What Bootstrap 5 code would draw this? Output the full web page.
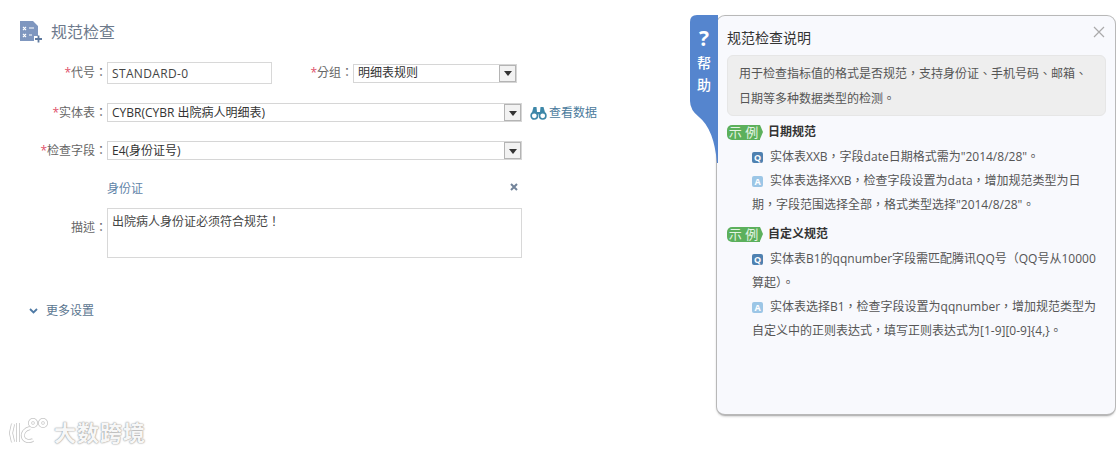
<!DOCTYPE html>
<html lang="zh-TW">
<head>
<meta charset="utf-8">
<title>规范检查</title>
<link href="https://cdn.jsdelivr.net/npm/bootstrap@5.3.0/dist/css/bootstrap.min.css" rel="stylesheet">
<style>
html,body{height:453px;overflow:hidden;background:#fff}
body{font-family:"Open Sans","Noto Sans CJK TC",sans-serif;font-size:12px;color:#444;position:relative}
.page-wrap{height:453px}
.left-side{width:716px;flex:none;padding:20px 0 0 20px}
.page-title{font-size:16px;line-height:24px;color:#6d7a8c;font-weight:400}
.title-row{height:24px;margin-bottom:18px;gap:8px}
.lbl{width:87px;text-align:right;color:#666;flex:none}
.req{color:#e0506a}
.frow-a{height:22px;margin-bottom:19px}
.frow-b{height:19px;margin-bottom:19px}
.tbox{width:165px;height:22px;border:1px solid #d8d8d8;padding:0 4px;line-height:21px;letter-spacing:.35px;color:#444}
.cbox{height:19px;border:1px solid #d6d6d6;padding-left:4px;color:#333;white-space:nowrap}
.cbox-wide{width:415px}
.cbox-mid{width:164px}
.cbox-btn{width:17px;height:17px;border:1px solid #b4b4b4;background:#f2f2f2;flex:none}
.cbox-btn::after{content:"";border-left:4px solid transparent;border-right:4px solid transparent;border-top:5px solid #333;margin-top:1px}
.lbl-two{width:78px;margin-left:3px}
.look-link{color:#4a7a9c;margin-left:8px;gap:2px}
.tag-row{width:415px;margin-left:87px;height:20px;margin-bottom:9px;color:#5f84a8}
.desc-box{width:415px;height:50px;border:1px solid #d8d8d8;padding:4px;color:#444;line-height:17px}
.desc-lbl{margin-bottom:10px}
.desc-row{margin-bottom:44px}
.more-row{color:#5b7690;padding-left:9px;gap:8px;height:18px}
.help-panel{position:relative;width:400px;height:401px;margin-top:15px;border:1px solid #b8b8b8;border-bottom-width:2px;border-radius:9px;background:#f8f9fd;padding:12px 10px 0;box-shadow:0 1px 2px rgba(0,0,0,.15)}
.help-tab{position:absolute;left:-27px;top:-1px;width:28px;height:148px;color:#fff;text-align:center;z-index:2}
.help-tab svg{position:absolute;left:0;top:0}
.help-tab span{position:relative;display:block}
.tab-q{font-size:21px;line-height:24px;margin-top:11px;font-weight:700}
.tab-t{font-size:14px;line-height:22px;font-weight:500}
.tab-first{margin-top:2px}
.close-x{position:absolute;right:10px;top:10px;width:12px;height:12px}
.help-head{font-size:14px;line-height:20px;color:#333;margin:0 0 7px;font-weight:400}
.intro-box{background:#eee;border:1px solid #e6e6e6;border-radius:6px;width:379px;height:61px;padding:5px 11px 0;line-height:25px;color:#555;margin-bottom:5px}
.eg-head{height:22px;font-weight:700;color:#333;line-height:22px;margin-bottom:2px}
.eg-tag{position:relative;display:block;width:33px;height:15px;background:#5cb05c;color:#e4f4e4;border-radius:5px 0 0 5px;font-size:13px;line-height:15px;font-weight:400;text-align:center;margin-right:8px;white-space:nowrap}
.eg-tag::after{content:"";position:absolute;left:33px;top:0;border-left:3px solid #5cb05c;border-top:7.5px solid transparent;border-bottom:7.5px solid transparent}
.qa{margin:0 0 0 25px;width:350px;line-height:24px;color:#555}
.qa-q,.qa-a{display:inline-block;width:11px;height:11px;border-radius:2px;color:#fff;font-size:9px;line-height:11px;text-align:center;margin-right:7px;font-weight:700}
.qa-q{background:#4f81b0}
.qa-a{background:#9cc6e6}
.eg-block{margin-bottom:6px}
.wm{position:absolute;left:9px;top:418px;gap:3px;color:#f7f7f7;font-size:22px;line-height:28px;font-weight:700;letter-spacing:1px;text-shadow:0 0 2px #999,0 0 1px #999}
</style>
</head>
<body>
<div class="d-flex page-wrap">
  <div class="left-side">
    <div class="d-flex align-items-center title-row">
      <svg width="23" height="23" viewBox="0 0 23 23">
        <path d="M0 0h13l5 5v10h-4v5H0z" fill="#7f97bf"/>
        <path d="M3 6l3 3M6 6l-3 3M9 7h5M3 13l3 3M6 13l-3 3M9 14h3" stroke="#fff" stroke-width="1.100" fill="none"/>
        <path d="M15 18h7M18.500 14.500v7" stroke="#5f7a9f" stroke-width="1.800" fill="none"/>
      </svg>
      <h1 class="page-title mb-0">规范检查</h1>
    </div>
    <div class="d-flex align-items-center frow-a">
      <div class="lbl"><span class="req">*</span>代号：</div>
      <div class="tbox">STANDARD-0</div>
      <div class="lbl lbl-two"><span class="req">*</span>分组：</div>
      <div class="cbox cbox-mid d-flex align-items-center justify-content-between"><span>明细表规则</span><span class="cbox-btn d-flex align-items-center justify-content-center"></span></div>
    </div>
    <div class="d-flex align-items-center frow-b">
      <div class="lbl"><span class="req">*</span>实体表：</div>
      <div class="cbox cbox-wide d-flex align-items-center justify-content-between"><span>CYBR(CYBR 出院病人明细表)</span><span class="cbox-btn d-flex align-items-center justify-content-center"></span></div>
      <div class="look-link d-flex align-items-center">
        <svg width="17" height="14" viewBox="0 0 17 14"><path d="M3.500 1h3l.5 5h3l.5-5h3l2.500 9h-5l-.5-1.500h-4l-.5 1.500H1z" fill="#3d87a8"/><circle cx="4.300" cy="9.800" r="3.200" fill="#fff" stroke="#3d87a8" stroke-width="1.600"/><circle cx="12.700" cy="9.800" r="3.200" fill="#fff" stroke="#3d87a8" stroke-width="1.600"/></svg>
        <span>查看数据</span>
      </div>
    </div>
    <div class="d-flex align-items-center frow-b">
      <div class="lbl"><span class="req">*</span>检查字段：</div>
      <div class="cbox cbox-wide d-flex align-items-center justify-content-between"><span>E4(身份证号)</span><span class="cbox-btn d-flex align-items-center justify-content-center"></span></div>
    </div>
    <div class="d-flex align-items-center justify-content-between tag-row">
      <span>身份证</span>
      <svg class="me-1 mb-1" width="8" height="8" viewBox="0 0 8 8"><path d="M1 1l6 6M7 1L1 7" stroke="#73849a" stroke-width="2"/></svg>
    </div>
    <div class="d-flex align-items-center desc-row">
      <div class="lbl desc-lbl">描述：</div>
      <div class="desc-box">出院病人身份证必须符合规范！</div>
    </div>
    <div class="d-flex align-items-center more-row">
      <svg width="9" height="6" viewBox="0 0 9 6"><path d="M1 1l3.500 3.500L8 1" stroke="#4f7aa5" stroke-width="1.800" fill="none"/></svg>
      <span>更多设置</span>
    </div>
  </div>
  <div class="flex-shrink-0">
    <div class="help-panel">
      <div class="help-tab">
        <svg width="28" height="148" viewBox="0 0 28 148"><path d="M28 0H7Q0 0 0 7V86Q0 95 9 102Q24 114 27 148H28z" fill="#5585ce"/></svg>
        <span class="tab-q">?</span>
        <span class="tab-t tab-first">帮</span>
        <span class="tab-t">助</span>
      </div>
      <svg class="close-x" viewBox="0 0 12 12"><path d="M1 1l10 10M11 1L1 11" stroke="#aaa" stroke-width="1.200"/></svg>
      <h2 class="help-head">规范检查说明</h2>
      <div class="intro-box">用于检查指标值的格式是否规范，支持身份证、手机号码、邮箱、日期等多种数据类型的检测。</div>
      <div class="eg-block">
        <div class="d-flex align-items-center eg-head"><span class="eg-tag">示 例</span><span>日期规范</span></div>
        <p class="qa"><span class="qa-q">Q</span>实体表XXB，字段date日期格式需为"2014/8/28"。</p>
        <p class="qa"><span class="qa-a">A</span>实体表选择XXB，检查字段设置为data，增加规范类型为日期，字段范围选择全部，格式类型选择"2014/8/28"。</p>
      </div>
      <div class="eg-block">
        <div class="d-flex align-items-center eg-head"><span class="eg-tag">示 例</span><span>自定义规范</span></div>
        <p class="qa"><span class="qa-q">Q</span>实体表B1的qqnumber字段需匹配腾讯QQ号（QQ号从10000算起）。</p>
        <p class="qa"><span class="qa-a">A</span>实体表选择B1，检查字段设置为qqnumber，增加规范类型为自定义中的正则表达式，填写正则表达式为[1-9][0-9]{4,}。</p>
      </div>
    </div>
  </div>
</div>
<div class="wm d-flex align-items-center">
  <svg width="42" height="28" viewBox="0 0 42 28"><g fill="none" stroke="#c4c4c4" stroke-width="4"><path d="M4 6L2 15l2 9"/><path d="M9 5v19"/><path d="M21 10c-5 1-8 5-7 9s6 5 10 3"/><circle cx="24" cy="5" r="3"/><circle cx="34" cy="5" r="3"/></g><g fill="none" stroke="#fff" stroke-width="2.500"><path d="M4 6L2 15l2 9"/><path d="M9 5v19"/><path d="M21 10c-5 1-8 5-7 9s6 5 10 3"/><circle cx="24" cy="5" r="3"/><circle cx="34" cy="5" r="3"/></g></svg>
  <span>大数跨境</span>
</div>
</body>
</html>
